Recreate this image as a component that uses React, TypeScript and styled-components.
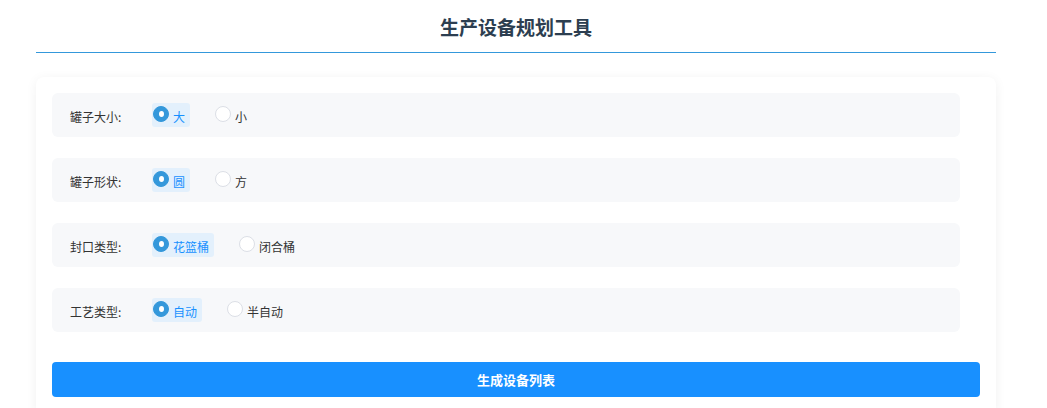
import styled, { createGlobalStyle } from 'styled-components'
import { useState } from 'react'

const GlobalStyle = createGlobalStyle`
  body {
    margin: 0;
    background: #ffffff;
    font-family: 'Noto Sans CJK SC', 'Noto Sans', sans-serif;
  }
`

const Page = styled.div`
  width: 960px;
  margin: 0 36px;
`
const Header = styled.header`
  border-bottom: 1px solid #3498db;
  padding: 14px 0 13px;
  text-align: center;
`
const Title = styled.h1`
  margin: 0;
  font-size: 19px;
  line-height: 25px;
  font-weight: 700;
  color: #2c3e50;
`
const Card = styled.div`
  margin-top: 24px;
  background: #ffffff;
  border-radius: 8px;
  box-shadow: 0 2px 12px rgba(0, 0, 0, 0.06);
  padding: 16px 16px 24px;
`
const Row = styled.div`
  display: flex;
  align-items: center;
  width: 908px;
  height: 44px;
  margin-bottom: 21px;
  padding: 0 18px;
  box-sizing: border-box;
  background: #f7f8fa;
  border-radius: 6px;
`
const Label = styled.span`
  width: 82px;
  font-size: 12px;
  color: #333333;
  padding-top: 3px;
`
const Options = styled.div`
  display: flex;
  align-items: center;
  gap: 24px;
`
const Option = styled.label<{ $active: boolean }>`
  display: flex;
  align-items: center;
  gap: 4px;
  height: 24px;
  padding: 0 5px 0 1px;
  border-radius: 3px;
  font-size: 12px;
  cursor: pointer;
  color: ${(p) => (p.$active ? '#1890ff' : '#333333')};
  background: ${(p) => (p.$active ? '#e3f0fc' : 'transparent')};
  span {
    padding-top: 2px;
  }
`
const Dot = styled.i<{ $active: boolean }>`
  display: flex;
  align-items: center;
  justify-content: center;
  width: 16px;
  height: 16px;
  box-sizing: border-box;
  border-radius: 50%;
  margin-top: -3px;
  border: 1px solid ${(p) => (p.$active ? '#3498db' : '#dcdfe6')};
  background: ${(p) => (p.$active ? '#3498db' : '#ffffff')};
  &::after {
    content: '';
    width: 5px;
    height: 6px;
    border-radius: 50%;
    background: #ffffff;
    display: ${(p) => (p.$active ? 'block' : 'none')};
  }
`
const SubmitBtn = styled.button`
  display: block;
  width: 100%;
  height: 35px;
  margin-top: 30px;
  border: 0;
  border-radius: 4px;
  background: #1890ff;
  color: #ffffff;
  font-family: inherit;
  font-size: 13px;
  font-weight: 700;
  cursor: pointer;
`

const fields = [
  { key: 'size', label: '罐子大小:', options: ['大', '小'] },
  { key: 'shape', label: '罐子形状:', options: ['圆', '方'] },
  { key: 'seal', label: '封口类型:', options: ['花篮桶', '闭合桶'] },
  { key: 'craft', label: '工艺类型:', options: ['自动', '半自动'] },
]

export default function App() {
  const [values, setValues] = useState<Record<string, string>>({
    size: '大',
    shape: '圆',
    seal: '花篮桶',
    craft: '自动',
  })
  const onPick = (key: string, value: string) => {
    setValues((prev) => ({ ...prev, [key]: value }))
  }
  return (
    <Page>
      <GlobalStyle />
      <Header>
        <Title>生产设备规划工具</Title>
      </Header>
      <Card>
        {fields.map((field) => (
          <Row key={field.key}>
            <Label>{field.label}</Label>
            <Options>
              {field.options.map((opt) => {
                const active = values[field.key] === opt
                return (
                  <Option
                    key={opt}
                    $active={active}
                    onClick={() => onPick(field.key, opt)}
                  >
                    <Dot $active={active} />
                    <span>{opt}</span>
                  </Option>
                )
              })}
            </Options>
          </Row>
        ))}
        <SubmitBtn>生成设备列表</SubmitBtn>
      </Card>
    </Page>
  )
}
